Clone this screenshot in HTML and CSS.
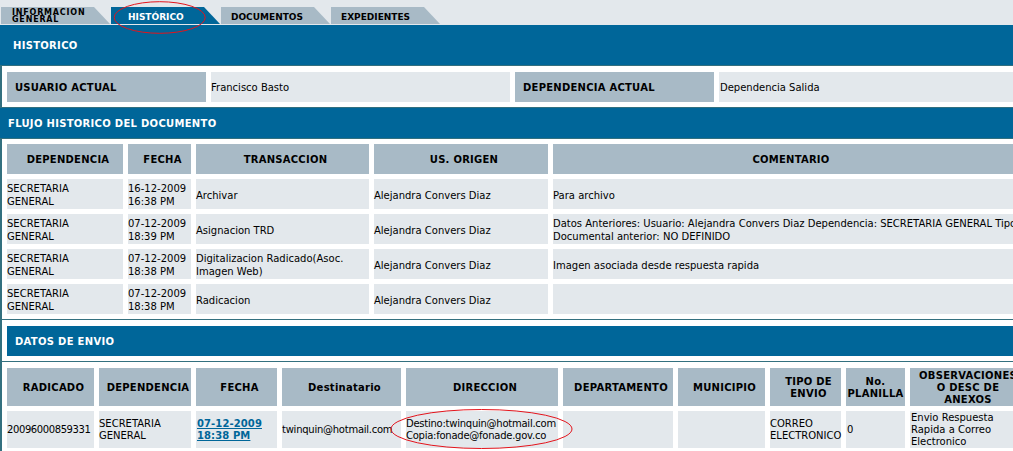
FILE: index.html
```html
<!DOCTYPE html>
<html lang="es">
<head>
<meta charset="utf-8">
<title>Histórico del documento</title>
<link rel="stylesheet" href="styles.css">
</head>
<body>
<div class="viewport">
  <div class="page">
    <nav class="tabs">
      <a class="tab two">INFORMACION<br>GENERAL</a>
      <a class="tab active">HISTÓRICO</a>
      <a class="tab">DOCUMENTOS</a>
      <a class="tab">EXPEDIENTES</a>
    </nav>

    <div class="bar bar-main">HISTORICO</div>

    <div class="sect sect-user">
      <table class="grid user-grid">
        <tr>
          <th class="label u-label">USUARIO ACTUAL</th>
          <td class="u-value">Francisco Basto</td>
          <th class="label u-label">DEPENDENCIA ACTUAL</th>
          <td class="u-value2">Dependencia Salida</td>
        </tr>
      </table>
    </div>

    <div class="bar bar-flujo">FLUJO HISTORICO DEL DOCUMENTO</div>

    <div class="sect">
      <table class="grid flujo">
        <tr>
          <th class="f-dep">DEPENDENCIA</th>
          <th class="f-fecha">FECHA</th>
          <th class="f-trans">TRANSACCION</th>
          <th class="f-orig">US. ORIGEN</th>
          <th class="f-com">COMENTARIO</th>
        </tr>
        <tr>
          <td>SECRETARIA<br>GENERAL</td>
          <td>16-12-2009<br>16:38 PM</td>
          <td>Archivar</td>
          <td>Alejandra Convers Diaz</td>
          <td>Para archivo</td>
        </tr>
        <tr>
          <td>SECRETARIA<br>GENERAL</td>
          <td>07-12-2009<br>18:39 PM</td>
          <td>Asignacion TRD</td>
          <td>Alejandra Convers Diaz</td>
          <td class="nowrap">Datos Anteriores: Usuario: Alejandra Convers Diaz Dependencia: SECRETARIA GENERAL Tipo<br>Documental anterior: NO DEFINIDO</td>
        </tr>
        <tr>
          <td>SECRETARIA<br>GENERAL</td>
          <td>07-12-2009<br>18:38 PM</td>
          <td>Digitalizacion Radicado(Asoc.<br>Imagen Web)</td>
          <td>Alejandra Convers Diaz</td>
          <td>Imagen asociada desde respuesta rapida</td>
        </tr>
        <tr>
          <td>SECRETARIA<br>GENERAL</td>
          <td>07-12-2009<br>18:38 PM</td>
          <td>Radicacion</td>
          <td>Alejandra Convers Diaz</td>
          <td></td>
        </tr>
      </table>
    </div>

    <div class="sect sect-datos">
      <div class="bar bar-datos">DATOS DE ENVIO</div>
    </div>

    <div class="sect sect-envio">
      <table class="grid envio">
        <tr class="envio-head">
          <th class="e-rad">RADICADO</th>
          <th class="e-dep">DEPENDENCIA</th>
          <th class="e-fecha">FECHA</th>
          <th class="e-dest">Destinatario</th>
          <th class="e-dir">DIRECCION</th>
          <th class="e-depto">DEPARTAMENTO</th>
          <th class="e-mun">MUNICIPIO</th>
          <th class="e-tipo">TIPO DE<br>ENVIO</th>
          <th class="e-plan">No.<br>PLANILLA</th>
          <th class="e-obs">OBSERVACIONES<br>O DESC DE<br>ANEXOS</th>
        </tr>
        <tr class="envio-row">
          <td class="tight-num">20096000859331</td>
          <td>SECRETARIA<br>GENERAL</td>
          <td class="indent"><a class="fecha-link">07-12-2009<br>18:38 PM</a></td>
          <td class="tight">twinquin@hotmail.com</td>
          <td class="tight">Destino:twinquin@hotmail.com<br>Copia:fonade@fonade.gov.co</td>
          <td></td>
          <td></td>
          <td class="nowrap">CORREO<br>ELECTRONICO</td>
          <td class="indent">0</td>
          <td class="indent">Envio Respuesta<br>Rapida a Correo<br>Electronico</td>
        </tr>
      </table>
    </div>

    <svg class="marks" width="1013" height="451" viewBox="0 0 1013 451" aria-hidden="true">
      <ellipse cx="159.7" cy="17.5" rx="45.5" ry="15.8" />
      <ellipse cx="481.5" cy="429" rx="90.5" ry="19.5" />
    </svg>
  </div>
</div>
</body>
</html>
```

FILE: styles.css
```css
* {
  box-sizing: border-box;
}

html,
body {
  margin: 0;
  padding: 0;
  background: #ffffff;
}

body {
  font-family: "DejaVu Sans", Verdana, sans-serif;
  font-size: 10px;
  line-height: 12px;
  color: #000000;
}

.viewport {
  width: 1013px;
  height: 451px;
  overflow: hidden;
}

.page {
  position: relative;
  width: 1030px;
}

/* ---------- tabs ---------- */
.tabs {
  display: flex;
  gap: 1px;
  height: 25px;
  padding: 7px 0 1px 1px;
  background: #e3e8ec;
}

.tab {
  display: block;
  width: 109px;
  height: 17px;
  padding: 3px 0 0 10px;
  background: #a8bac6;
  color: #000000;
  font-size: 9px;
  line-height: 14px;
  font-weight: bold;
  white-space: nowrap;
  text-decoration: none;
  clip-path: polygon(0 0, calc(100% - 16px) 0, 100% 100%, 0 100%);
}

.tab.two {
  font-size: 8px;
  line-height: 7px;
  letter-spacing: 0.8px;
  padding: 2px 0 0 11px;
}

.tab.active {
  background: #006699;
  color: #ffffff;
  padding-left: 17px;
}

/* ---------- section bars ---------- */
.bar {
  background: #006699;
  color: #ffffff;
  font-weight: bold;
  letter-spacing: 0.3px;
  white-space: nowrap;
}

.bar-main {
  height: 41px;
  padding: 2px 0 0 13px;
  line-height: 38px;
  border-bottom: 1px solid #33707f;
}

.bar-flujo {
  height: 32px;
  padding: 2px 0 0 8px;
  line-height: 28px;
  border-top: 1px solid #33707f;
  border-bottom: 1px solid #33707f;
}

.bar-datos {
  height: 30px;
  padding: 2px 0 0 8px;
  line-height: 28px;
}

/* ---------- sections ---------- */
.sect {
  border-left: 2px solid #33707f;
}

.sect-user {
  padding-top: 1px;
}

.sect-datos {
  padding: 6px 0 5px 5px;
  border-top: 1px solid #33707f;
  border-bottom: 1px solid #33707f;
}

.sect-envio {
  padding-top: 1px;
  border-bottom: 1px solid #33707f;
}

/* ---------- tables ---------- */
.grid {
  border-collapse: separate;
  border-spacing: 5px;
  table-layout: fixed;
}

.grid th,
.grid td {
  padding: 2px 0 0 0;
  vertical-align: middle;
  text-align: left;
  font-weight: normal;
  height: 30px;
}

.grid th {
  background: #a8bac6;
  font-weight: bold;
  text-align: center;
  padding-left: 6px;
  letter-spacing: 0.25px;
  white-space: nowrap;
}

.grid td {
  background: #e3e8ec;
}

.flujo td {
  line-height: 13px;
}

.grid th.label {
  text-align: left;
  padding-left: 8px;
}

.nowrap {
  white-space: nowrap;
}

.indent {
  padding-left: 1px !important;
}

.tight {
  letter-spacing: -0.25px;
  white-space: nowrap;
}

.tight-num {
  letter-spacing: -0.4px;
  white-space: nowrap;
}

/* user row */
.user-grid {
  width: 1022px;
}

.u-label {
  width: 199px;
}

.u-value {
  width: 299px;
}

.u-value2 {
  width: 300px;
  padding-left: 1px !important;
}

/* flujo table */
.flujo {
  width: 1026px;
}

.f-dep {
  width: 116px;
}

.f-fecha {
  width: 63px;
}

.f-trans {
  width: 173px;
}

.f-orig {
  width: 174px;
}

.f-com {
  width: 470px;
}

/* envio table */
.envio {
  width: 1023px;
}

.envio-head th {
  height: 35px;
}

.envio-row td {
  height: 37px;
  padding-top: 1px;
}

.e-rad { width: 87px; }
.e-dep { width: 92px; }
.e-fecha { width: 81px; }
.e-dest { width: 119px; }
.e-dir { width: 152px; }
.e-depto { width: 110px; }
.e-mun { width: 87px; }
.e-tipo { width: 71px; }
.e-plan { width: 59px; padding-left: 0 !important; }
.e-obs { width: 110px; }

.fecha-link {
  color: #006699;
  font-weight: bold;
  letter-spacing: 0.1px;
  text-decoration: underline;
}

/* ---------- annotation marks ---------- */
.marks {
  position: absolute;
  left: 0;
  top: 0;
  pointer-events: none;
}

.marks ellipse {
  fill: none;
  stroke: #e3141c;
  stroke-width: 1;
}
```
